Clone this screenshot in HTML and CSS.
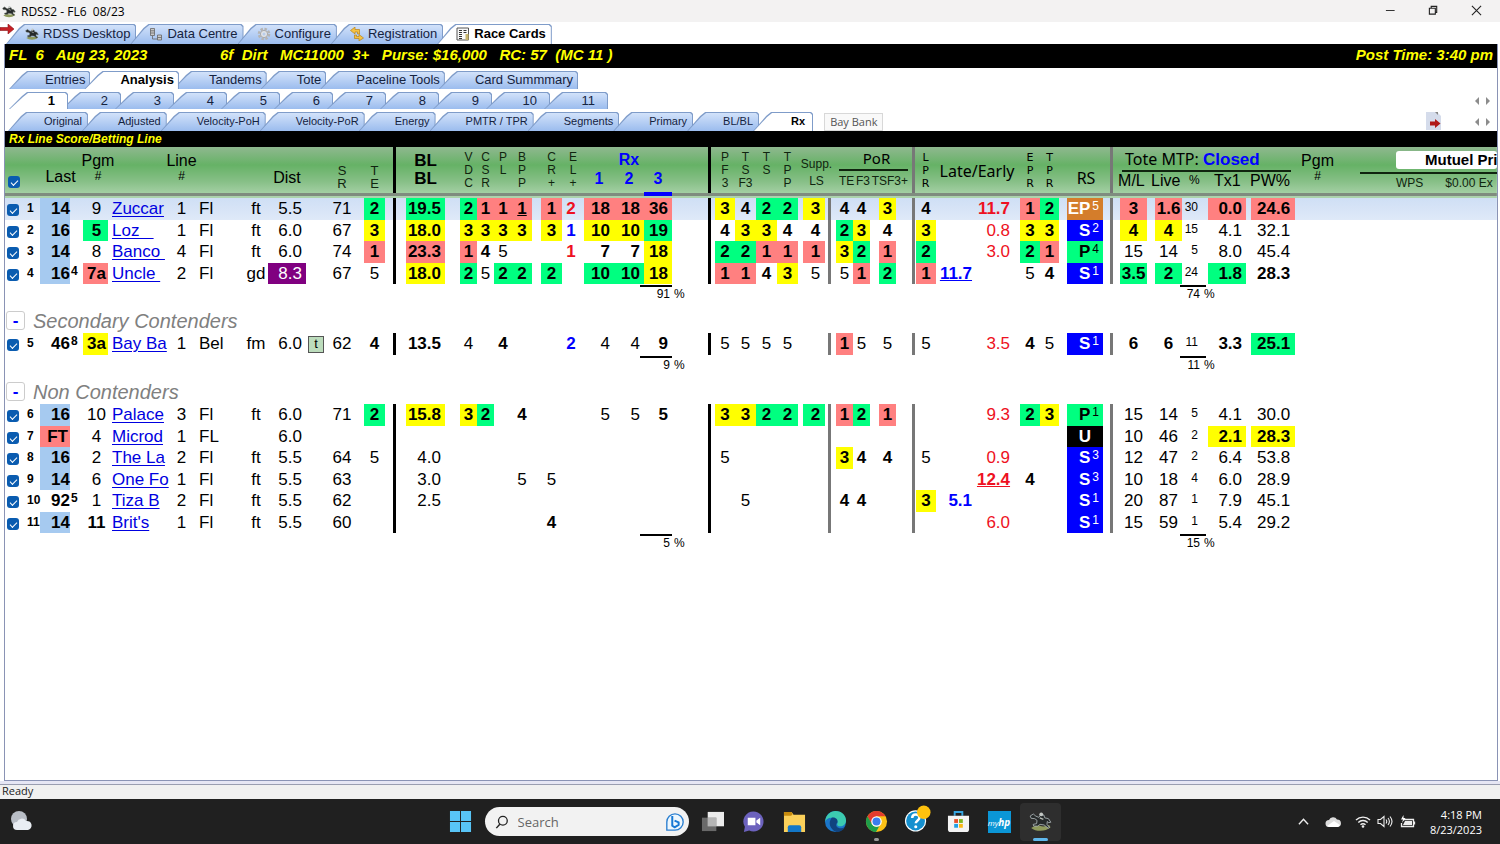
FILE: index.html
```html
<!DOCTYPE html>
<html lang="en">
<head>
<meta charset="utf-8">
<title>RDSS2 - FL6 08/23</title>
<link rel="stylesheet" href="styles.css">
</head>
<body>
<svg class="defs" aria-hidden="true">
  <symbol id="horse" viewBox="0 0 16 14">
    <path d="M1.500 11.500q3-2.500 6-1.500t6.500-.5l1 1.500q-3 2.500-7 2.500t-6.500-2z" fill="#8f9a5c"/>
    <path d="M.8 3.200L3 1.800l1.800 1.500 2 .8L8 2.500l2.300 0 .7 2 2.500.5 1.700 2.500-1.500.3-1-.8-.2 2 1.800 2.200-1 .4-2.800-2.200-2.800-.4-1.800 1.200-2.600 0-.4-1.200 2.400-.5.3-2.300L4 5 1.500 4.800z" fill="#25292a" stroke="currentColor" stroke-width=".6"/>
    <circle cx="8.500" cy="2" r="1.300" fill="#c3c7c4"/>
    <path d="M7.500 4.500l2.500 1" stroke="#b9bdb6" stroke-width=".9"/>
  </symbol>
  <symbol id="pair" viewBox="0 0 17 8"><path d="M4 0v8L0 4zM11 0v8l4-4z" fill="#8c8c8c"/></symbol>
</svg>
<div class="window">
  <header class="titlebar">
    <svg class="app-icon horse"><use href="#horse"/></svg>
    <span class="title">RDSS2 - FL6&nbsp; 08/23</span>
    <button class="win-btn" aria-label="Minimize"><svg viewBox="0 0 12 12"><path d="M1 6h9.500" stroke="#222" fill="none"/></svg></button>
    <button class="win-btn" aria-label="Restore"><svg viewBox="0 0 12 12"><path d="M1.500 3.500h6.500v6.500H1.500zM3.500 3V1.500h6V8H8.500" stroke="#222" stroke-width="1.200" fill="none"/></svg></button>
    <button class="win-btn" aria-label="Close"><svg viewBox="0 0 12 12"><path d="M1 1l10 10M11 1L1 11" stroke="#222" stroke-width="1.200" fill="none"/></svg></button>
  </header>

  <nav class="tabs main-tabs">
    <button class="tab"><svg class="horse"><use href="#horse"/></svg>RDSS Desktop</button>
    <button class="tab"><svg viewBox="0 0 14 14"><g fill="#c9c9c9" stroke="#666" stroke-width=".8"><path d="M1.500 1.500h4v7h-4zM1.500 3.800h4M1.500 6h4M8.500 8h4v5h-4zM8.500 10.500h4"/><path d="M3.500 9v3h5" fill="none"/></g></svg>Data Centre</button>
    <button class="tab"><svg viewBox="0 0 14 14"><circle cx="7" cy="7" r="5" fill="none" stroke="#b4b4b4" stroke-width="2.600" stroke-dasharray="2.400 1.500"/><circle cx="7" cy="7" r="3.600" fill="#dfe3e8" stroke="#aaa"/><circle cx="7" cy="7" r="1.500" fill="#b9cdea"/></svg>Configure</button>
    <button class="tab"><svg viewBox="0 0 14 14"><path d="M5 0v2.500h4.500V7h-2V5H5v2L0.500 3.500zM9 14v-2.500H4.500V8h2v1.500H9V7.500l4.500 3.500z" fill="#f5c243" stroke="#b98318" stroke-width=".7"/></svg>Registration</button>
    <button class="tab on"><svg viewBox="0 0 14 14"><path d="M1 1h11.500v12H1z" fill="#f8f8f8" stroke="#555"/><path d="M3 3.500h3M3 5.500h3M3 7.500h3M3 9.500h3M3 11.500h3M7.500 3.500h3M7.500 5.500h3" stroke="#333"/><path d="M9.500 7h3v6h-3z" fill="#c8b56a"/></svg>Race Cards</button>
    <svg class="dock-arrow" viewBox="0 0 14 10"><path d="M0 3.500h8V0l6 5-6 5V6.500H0z" fill="#c61f24" stroke="#8d1518" stroke-width=".6"/></svg>
  </nav>

  <main class="panel">
    <div class="race-bar">
      <span class="race-date">FL  6   Aug 23, 2023</span>
      <span class="race-info">6f  Dirt   MC11000  3+   Purse: $16,000   RC: 57  (MC 11 )</span>
      <span>Post Time: 3:40 pm</span>
    </div>
    <nav class="tabs view-tabs">
      <button class="tab">Entries</button><button class="tab on">Analysis</button><button class="tab">Tandems</button><button class="tab">Tote</button><button class="tab">Paceline Tools</button><button class="tab">Card Summmary</button>
    </nav>
    <nav class="tabs race-tabs">
      <button class="tab on">1</button><button class="tab">2</button><button class="tab">3</button><button class="tab">4</button><button class="tab">5</button><button class="tab">6</button><button class="tab">7</button><button class="tab">8</button><button class="tab">9</button><button class="tab wide">10</button><button class="tab wide">11</button>
      <svg class="pair"><use href="#pair"/></svg>
    </nav>
    <nav class="tabs sheet-tabs">
      <button class="tab">Original</button><button class="tab">Adjusted</button><button class="tab">Velocity-PoH</button><button class="tab">Velocity-PoR</button><button class="tab">Energy</button><button class="tab">PMTR / TPR</button><button class="tab">Segments</button><button class="tab">Primary</button><button class="tab">BL/BL</button><button class="tab on">Rx</button>
      <span class="tip" role="tooltip">Bay Bank</span>
      <svg class="export" viewBox="0 0 15 18"><path d="M0 0h11l4 4v14H0z" fill="#d5dceb"/><path d="M9 0l3 3V0z" fill="#888"/><path d="M4 9.500h5V7l5.500 4.500L9 16v-2.500H4z" fill="#b01818"/></svg>
      <svg class="pair"><use href="#pair"/></svg>
    </nav>
    <h1 class="sheet-title">Rx Line Score/Betting Line</h1>

    <table class="grid">
      <colgroup>
        <col class="w17"><col class="w18"><col class="w30"><col class="w13"><col class="w25"><col class="w63"><col class="w21"><col class="w52"><col class="w24"><col class="w38"><col class="w22"><col class="w28"><col class="w29"><col class="w11">
        <col class="w49"><col class="w32"><col class="w17"><col class="w18"><col class="w20"><col class="w30"><col class="w22"><col class="w30"><col class="w30"><col class="w28"><col class="w39">
        <col class="w24"><col class="w21"><col class="w21"><col class="w21"><col class="w27"><col class="w6"><col class="w22"><col class="w17"><col class="w26"><col class="w19">
        <col class="w21"><col class="w40"><col class="w38"><col class="w26"><col class="w19"><col class="w44"><col class="w10">
        <col class="w34"><col class="w35"><col class="w26"><col class="w38"><col class="w49"><col>
      </colgroup>
      <thead>
        <tr>
          <th><div class="h check-all"><input type="checkbox" checked aria-label="Select all"></div></th>
          <th></th>
          <th><div class="h low last">Last</div></th>
          <th></th>
          <th><div class="h two pgm"><span>Pgm</span><small>#</small></div></th>
          <th></th>
          <th><div class="h two"><span>Line</span><small>#</small></div></th>
          <th></th><th></th>
          <th><div class="h low">Dist</div></th>
          <th></th>
          <th><div class="h letters drop"><span>S</span><span>R</span></div></th>
          <th class="p8"><div class="h letters drop"><span>T</span><span>E</span></div></th>
          <th class="bar"></th>
          <th class="p10"><div class="h strong"><span>BL</span><span>BL</span></div></th>
          <th class="p15"><div class="h letters"><span>V</span><span>D</span><span>C</span></div></th>
          <th><div class="h letters"><span>C</span><span>S</span><span>R</span></div></th>
          <th><div class="h letters"><span>P</span><span>L</span></div></th>
          <th><div class="h letters"><span>B</span><span>P</span><span>P</span></div></th>
          <th class="p9"><div class="h letters"><span>C</span><span>R</span><span>+</span></div></th>
          <th><div class="h letters"><span>E</span><span>L</span><span>+</span></div></th>
          <th><div class="h rx"><span></span><span>1</span></div></th>
          <th><div class="h rx"><span>Rx</span><span>2</span></div></th>
          <th><div class="h rx active"><span></span><span>3</span></div></th>
          <th class="bar"></th>
          <th class="p4"><div class="h letters"><span>P</span><span>F</span><span>3</span></div></th>
          <th><div class="h letters"><span>T</span><span>S</span><span>F3</span></div></th>
          <th><div class="h letters"><span>T</span><span>S</span></div></th>
          <th><div class="h letters"><span>T</span><span>P</span><span>P</span></div></th>
          <th class="p10"><div class="h supp"><span>Supp.</span><span>LS</span></div></th>
          <th class="bar none"></th>
          <th colspan="3"><div class="por"><b>PoR</b><p><span>TE</span><span>F3</span><span>TSF3+</span></p></div></th>
          <th class="bar grey"></th>
          <th><div class="h letters dark"><span>L</span><span>P</span><span>R</span></div></th>
          <th colspan="2"><div class="h late">Late/Early</div></th>
          <th class="p6"><div class="h letters dark"><span>E</span><span>P</span><span>R</span></div></th>
          <th><div class="h letters dark"><span>T</span><span>P</span><span>R</span></div></th>
          <th class="p10"><div class="h low tahoma">RS</div></th>
          <th class="bar grey"></th>
          <th colspan="5"><div class="tote"><p class="mtp">Tote MTP: <b>Closed</b></p><p class="cols"><span>M/L</span><span>Live</span><small>%</small><span>Tx1</span><span>PW%</span></p></div></th>
          <th><div class="mutuel"><div class="h two"><span>Pgm</span><small>#</small></div><div class="prices"><b>Mutuel Pri</b><p><span>WPS</span><span>$0.00 Ex</span></p></div></div></th>
        </tr>
      </thead>
      <tbody>
        <tr class="current"><td><input type="checkbox" checked aria-label="Line 1"><td>1<td class="l">14<td><td>9<td><a href="#">Zuccar</a><td>1<td>Fl<td>ft<td>5.5<td><td>71<td class="g">2<td class="k"><td class="g">19.5<td class="g">2<td class="r">1<td class="r">1<td class="r"><u>1</u><td class="r">1<td class="red b">2<td class="r">18<td class="r">18<td class="r">36<td class="k"><td class="y">3<td class="b">4<td class="g">2<td class="g">2<td class="y">3<td class="k"><td class="b">4<td class="b">4<td class="y">3<td class="k"><td class="b">4<td><td class="red b">11.7<td class="r">1<td class="g">2<td class="ep">EP<sup>5</sup><td class="k"><td class="r">3<td class="r">1.6<td>30<td class="r">0.0<td class="r">24.6<td></tr>
        <tr><td><input type="checkbox" checked aria-label="Line 2"><td>2<td class="l">16<td><td class="g">5<td><a href="#">Loz   </a><td>1<td>Fl<td>ft<td>6.0<td><td>67<td class="y">3<td class="k"><td class="y">18.0<td class="y">3<td class="y">3<td class="y">3<td class="y">3<td class="y">3<td class="blue b">1<td class="y">10<td class="y">10<td class="g">19<td class="k"><td class="b">4<td class="y">3<td class="y">3<td class="b">4<td class="b">4<td class="k"><td class="g">2<td class="y">3<td class="b">4<td class="k"><td class="y">3<td><td class="red">0.8<td class="y">3<td class="y">3<td class="s">S<sup>2</sup><td class="k"><td class="y">4<td class="y">4<td>15<td>4.1<td>32.1<td></tr>
        <tr><td><input type="checkbox" checked aria-label="Line 3"><td>3<td class="l">14<td><td>8<td><a href="#">Banco </a><td>4<td>Fl<td>ft<td>6.0<td><td>74<td class="r">1<td class="k"><td class="r">23.3<td class="r">1<td class="b">4<td>5<td><td><td class="red b">1<td class="b">7<td class="b">7<td class="y">18<td class="k"><td class="g">2<td class="g">2<td class="r">1<td class="r">1<td class="r">1<td class="k"><td class="y">3<td class="g">2<td class="r">1<td class="k"><td class="g">2<td><td class="red">3.0<td class="g">2<td class="r">1<td class="p">P<sup>4</sup><td class="k"><td>15<td>14<td>5<td>8.0<td>45.4<td></tr>
        <tr><td><input type="checkbox" checked aria-label="Line 4"><td>4<td class="l">16<td>4<td class="r">7a<td><a href="#">Uncle </a><td>2<td>Fl<td>gd<td class="v">8.3<td><td>67<td>5<td class="k"><td class="y">18.0<td class="g">2<td>5<td class="g">2<td class="g">2<td class="g">2<td><td class="g">10<td class="g">10<td class="y">18<td class="k"><td class="r">1<td class="r">1<td class="b">4<td class="y">3<td>5<td class="k"><td>5<td class="r">1<td class="g">2<td class="k"><td class="r">1<td class="blue b"><u>11.7</u><td><td>5<td class="b">4<td class="s">S<sup>1</sup><td class="k"><td class="g">3.5<td class="g">2<td>24<td class="g">1.8<td class="b">28.3<td></tr>
      </tbody>
      <tbody>
        <tr class="total"><td colspan="21"><td colspan="3"><div class="sum"><span>91</span>%</div><td colspan="20"><td><div class="sum narrow"><span>74</span>%</div><td colspan="3"></tr>
        <tr class="group"><td colspan="48"><div><button>-</button><h2>Secondary Contenders</h2></div></tr>
      </tbody>
      <tbody>
        <tr><td><input type="checkbox" checked aria-label="Line 5"><td>5<td class="b">46<td>8<td class="y">3a<td><a href="#">Bay Ba</a><td>1<td>Bel<td>fm<td>6.0<td><span class="turf">t</span><td>62<td class="b">4<td class="k"><td class="b">13.5<td>4<td><td class="b">4<td><td><td class="blue b">2<td>4<td>4<td class="b">9<td class="k"><td>5<td>5<td>5<td>5<td><td class="k"><td class="r">1<td>5<td>5<td class="k"><td>5<td><td class="red">3.5<td class="b">4<td>5<td class="s">S<sup>1</sup><td class="k"><td class="b">6<td class="b">6<td>11<td class="b">3.3<td class="g">25.1<td></tr>
      </tbody>
      <tbody>
        <tr class="total"><td colspan="21"><td colspan="3"><div class="sum"><span>9</span>%</div><td colspan="20"><td><div class="sum narrow"><span>11</span>%</div><td colspan="3"></tr>
        <tr class="group"><td colspan="48"><div><button>-</button><h2>Non Contenders</h2></div></tr>
      </tbody>
      <tbody>
        <tr><td><input type="checkbox" checked aria-label="Line 6"><td>6<td class="l">16<td><td>10<td><a href="#">Palace</a><td>3<td>Fl<td>ft<td>6.0<td><td>71<td class="g">2<td class="k"><td class="y">15.8<td class="y">3<td class="g">2<td><td class="b">4<td><td><td>5<td>5<td class="b">5<td class="k"><td class="y">3<td class="y">3<td class="g">2<td class="g">2<td class="g">2<td class="k"><td class="r">1<td class="g">2<td class="r">1<td class="k"><td><td><td class="red">9.3<td class="g">2<td class="y">3<td class="p">P<sup>1</sup><td class="k"><td>15<td>14<td>5<td>4.1<td>30.0<td></tr>
        <tr><td><input type="checkbox" checked aria-label="Line 7"><td>7<td class="r ft">FT<td><td>4<td><a href="#">Microd</a><td>1<td>FL<td><td>6.0<td><td><td><td class="k"><td><td><td><td><td><td><td><td><td><td><td class="k"><td><td><td><td><td><td class="k"><td><td><td><td class="k"><td><td><td><td><td><td class="un">U<td class="k"><td>10<td>46<td>2<td class="y">2.1<td class="y">28.3<td></tr>
        <tr><td><input type="checkbox" checked aria-label="Line 8"><td>8<td class="l">16<td><td>2<td><a href="#">The La</a><td>2<td>Fl<td>ft<td>5.5<td><td>64<td>5<td class="k"><td>4.0<td><td><td><td><td><td><td><td><td><td class="k"><td>5<td><td><td><td><td class="k"><td class="y">3<td class="b">4<td class="b">4<td class="k"><td>5<td><td class="red">0.9<td><td><td class="s">S<sup>3</sup><td class="k"><td>12<td>47<td>2<td>6.4<td>53.8<td></tr>
        <tr><td><input type="checkbox" checked aria-label="Line 9"><td>9<td class="l">14<td><td>6<td><a href="#">One Fo</a><td>1<td>Fl<td>ft<td>5.5<td><td>63<td><td class="k"><td>3.0<td><td><td><td>5<td>5<td><td><td><td><td class="k"><td><td><td><td><td><td class="k"><td><td><td><td class="k"><td><td><td class="red b"><u>12.4</u><td class="b">4<td><td class="s">S<sup>3</sup><td class="k"><td>10<td>18<td>4<td>6.0<td>28.9<td></tr>
        <tr><td><input type="checkbox" checked aria-label="Line 10"><td>10<td class="b">92<td>5<td>1<td><a href="#">Tiza B</a><td>2<td>Fl<td>ft<td>5.5<td><td>62<td><td class="k"><td>2.5<td><td><td><td><td><td><td><td><td><td class="k"><td><td>5<td><td><td><td class="k"><td class="b">4<td class="b">4<td><td class="k"><td class="y">3<td class="blue b">5.1<td><td><td><td class="s">S<sup>1</sup><td class="k"><td>20<td>87<td>1<td>7.9<td>45.1<td></tr>
        <tr><td><input type="checkbox" checked aria-label="Line 11"><td>11<td class="l">14<td><td class="b">11<td><a href="#">Brit's</a><td>1<td>Fl<td>ft<td>5.5<td><td>60<td><td class="k"><td><td><td><td><td><td class="b">4<td><td><td><td><td class="k"><td><td><td><td><td><td class="k"><td><td><td><td class="k"><td><td><td class="red">6.0<td><td><td class="s">S<sup>1</sup><td class="k"><td>15<td>59<td>1<td>5.4<td>29.2<td></tr>
      </tbody>
      <tbody>
        <tr class="total"><td colspan="21"><td colspan="3"><div class="sum"><span>5</span>%</div><td colspan="20"><td><div class="sum narrow"><span>15</span>%</div><td colspan="3"></tr>
      </tbody>
    </table>
  </main>
  <footer class="status">Ready</footer>
</div>

<div class="taskbar">
  <button class="weather" aria-label="Weather"><svg viewBox="0 0 24 22"><circle cx="10" cy="9" r="8" fill="#b9bec6"/><path d="M8 20a4 4 0 0 1 0-8 5 5 0 0 1 9-1 4.500 4.500 0 0 1 2 9z" fill="#e9edf3"/></svg></button>
  <div class="apps">
    <button aria-label="Start"><svg viewBox="0 0 24 24"><path d="M1 1h10.500v10.500H1zM12.500 1H23v10.500H12.500zM1 12.500h10.500V23H1zM12.500 12.500H23V23H12.500z" fill="#58c4f6"/></svg></button>
    <label class="search">
      <svg viewBox="0 0 16 16"><circle cx="9" cy="6.500" r="5" fill="none" stroke="#222" stroke-width="1.500"/><path d="M5.500 10.500L1.500 15" stroke="#222" stroke-width="1.700"/></svg>
      <input type="text" placeholder="Search" aria-label="Search">
      <svg class="bing" viewBox="0 0 22 22"><path d="M2 20v-9a9 9 0 1 1 9 9z" fill="#eef7fd" stroke="#2b7fd0" stroke-width="1.500"/><path d="M8 4.500v10.500l2.500 1.800 4.500-2.600v-2.800L10.500 9.500" fill="none" stroke="#1778d4" stroke-width="2.200" stroke-linejoin="round"/></svg>
    </label>
    <button aria-label="Task view"><svg viewBox="0 0 24 24"><path d="M7 2h17v15H7z" fill="#ececec"/><path d="M1 8h15v14H1z" fill="#777" opacity=".85"/><path d="M7 8h9v9H7z" fill="#b5b5b5"/></svg></button>
    <button aria-label="Chat"><svg viewBox="0 0 24 24"><path d="M12 1.500a10.500 10.500 0 1 1-4.500 20L2 23l1-5.500A10.500 10.500 0 0 1 12 1.500z" fill="#6c62bd"/><path d="M6 8h8v8H6zM15 11l4-3v8l-4-3z" fill="#fff"/></svg></button>
    <button aria-label="File Explorer"><svg viewBox="0 0 24 24"><path d="M1 2h8l2 3h12v18H1z" fill="#fbd05a"/><path d="M1 2h8l1 2.500L8.500 6H1z" fill="#c78b0e"/><path d="M5 23v-5q0-2 2-2h10q2 0 2 2v5z" fill="#1377c8"/></svg></button>
    <button aria-label="Edge"><svg viewBox="0 0 24 24"><circle cx="12" cy="12" r="11" fill="#1b76c9"/><path d="M1 12C2 5 7 1 12 1c7 0 11 5 11 10 0 4-3 6-6 6-2 0-4-1-3-3 1-4-3-6-6-6-4 0-6 2-7 4z" fill="#3ccbb0"/><path d="M8 8c-4 5-2 12 5 15 4 0 7-2 9-5-6 3-12-1-8-5 1-3-2-6-6-5z" fill="#10437f"/></svg></button>
    <button class="running" aria-label="Chrome"><svg viewBox="0 0 24 24"><circle cx="12" cy="12" r="11" fill="#fbc116"/><path d="M2.500 6.500A11 11 0 0 1 21.500 6.500H12L7 15z" fill="#e33b2e"/><path d="M2.500 6.500L7.200 14.700Q9 17.500 12 17.500l3-.7L11.500 23A11 11 0 0 1 2.500 6.500z" fill="#1e9e4a"/><circle cx="12" cy="12" r="5.500" fill="#fff"/><circle cx="12" cy="12" r="4.200" fill="#3b7ded"/></svg></button>
    <button aria-label="Get Help"><svg class="help" viewBox="0 0 28 28"><circle cx="12" cy="16" r="11" fill="#fff"/><circle cx="12" cy="16" r="9.800" fill="#1590cf"/><path d="M8.500 13c0-5 7.500-4.500 7.500-.5 0 3-3.800 3-3.800 6" fill="none" stroke="#fff" stroke-width="2.600"/><circle cx="12.200" cy="22" r="1.600" fill="#fff"/><circle cx="20.500" cy="7" r="7" fill="#ffc20e"/></svg></button>
    <button aria-label="Microsoft Store"><svg viewBox="0 0 24 24"><path d="M8 6V2h8v4" fill="none" stroke="#36a5e0" stroke-width="2"/><path d="M1 6h22v14q0 3-3 3H4q-3 0-3-3z" fill="#f4f4f4"/><path d="M7.500 9.500h4v4h-4z" fill="#e8502a"/><path d="M12.500 9.500h4v4h-4z" fill="#7db81f"/><path d="M7.500 14.500h4v4h-4z" fill="#1ea0e6"/><path d="M12.500 14.500h4v4h-4z" fill="#fbb814"/></svg></button>
    <button aria-label="myHP"><span class="myhp">my<b>hp</b></span></button>
    <button class="running focused" aria-label="RDSS2"><svg class="horse"><use href="#horse"/></svg></button>
  </div>
  <div class="tray">
    <svg viewBox="0 0 12 12"><path d="M1 9l5-5.500L11 9" fill="none" stroke="#eee" stroke-width="1.500"/></svg>
    <svg class="cloud" viewBox="0 0 16 12"><path d="M4 11a3.500 3.500 0 0 1 0-7 4.500 4.500 0 0 1 8-.5A3.800 3.800 0 0 1 13 11z" fill="#ddd"/><path d="M2 10l7-5 6 4-2 2H4z" fill="#fff"/></svg>
    <svg class="wifi" viewBox="0 0 16 13"><path d="M1 5a10 10 0 0 1 14 0M3.300 7.500a6.500 6.500 0 0 1 9.400 0M5.500 9.800a3.500 3.500 0 0 1 5 0" fill="none" stroke="#eee" stroke-width="1.400"/><circle cx="8" cy="11.500" r="1.300" fill="#eee"/></svg>
    <svg class="sound" viewBox="0 0 16 13"><path d="M1 4.500h2.500L7 1.500v10L3.500 8.500H1zM9 4.500q1.500 2 0 4M11 3q2.800 3.500 0 7M13 1.500q4 5 0 10" fill="none" stroke="#eee" stroke-width="1.100"/></svg>
    <svg class="battery" viewBox="0 0 16 13"><path d="M3 4.500h10.500v7H1.500V8M14.500 6.500v3" fill="none" stroke="#eee" stroke-width="1.300"/><path d="M5 6h7v4H3z" fill="#eee"/><path d="M3.500 0L1 4.500h2L2 8l3.500-5h-2z" fill="#fff"/></svg>
    <div class="clock"><span>4:18 PM</span><span>8/23/2023</span></div>
  </div>
</div>
</body>
</html>
```
FILE: styles.css
```css
* { box-sizing: border-box; }
html, body { height: 100%; margin: 0; }
body {
  display: flex;
  flex-direction: column;
  overflow: hidden;
  background: #fff;
  color: #000;
  font-family: "Liberation Sans", Arial, sans-serif;
}
button, input { font: inherit; color: inherit; }
button { border: 0; padding: 0; background: none; }
p, h1, h2 { margin: 0; font-size: inherit; font-weight: inherit; }
.defs { position: absolute; width: 0; height: 0; }
.horse { color: #5c6258; }

.window { flex: 1; display: flex; flex-direction: column; min-height: 0; }
.titlebar {
  display: flex;
  align-items: center;
  height: 22px;
  padding-right: 2px;
  background: #f3f2f2;
  font: 12px "Open Sans", "Noto Sans", sans-serif;
}
.app-icon { width: 14px; height: 13px; margin: 0 5px 0 2px; }
.title { flex: 1; }
.win-btn { width: 43px; height: 20px; }
.win-btn svg { width: 11px; height: 11px; }

/* Tab strips */
.tabs { display: flex; align-items: flex-end; flex: none; position: relative; }
.tab {
  position: relative;
  z-index: 0;
  flex: none;
  height: 18px;
  margin-right: -6px;
  padding: 0 5px 0 36px;
  background: #7f9cc9;
  clip-path: polygon(0 100%, 13px 4px, 18px 0, calc(100% - 2px) 0, 100% 2px, 100% 100%);
  font-size: 13px;
  line-height: 18px;
  text-align: right;
  color: #15233f;
  white-space: nowrap;
}
.tab::before {
  content: "";
  position: absolute;
  z-index: -1;
  inset: 1px 1px 0 1px;
  background: linear-gradient(#d2e2fa, #9bbcee);
  clip-path: polygon(0 100%, 13px 4px, 18px 0, calc(100% - 2px) 0, 100% 2px, 100% 100%);
}
.tab.on { z-index: 1; color: #000; font-weight: bold; }
.tab.on::before { background: #fff; }

.main-tabs { height: 22px; padding-left: 6px; }
.main-tabs .tab {
  display: flex;
  align-items: center;
  gap: 4px;
  height: 20px;
  padding: 0 6px 0 19px;
}
.main-tabs .tab svg { width: 14px; height: 14px; }
.dock-arrow { position: absolute; left: 0; top: 2px; width: 14px; height: 10px; }
.view-tabs { height: 21px; padding-left: 4px; }
.race-tabs { height: 20px; padding-left: 4px; }
.race-tabs .tab { width: 59px; height: 17px; padding: 0 13px 0 0; line-height: 17px; }
.race-tabs .tab.wide { width: 64px; }
.sheet-tabs { height: 22px; padding-left: 3px; }
.sheet-tabs .tab { height: 19px; padding: 0 6px 0 36px; font-size: 11px; line-height: 19px; }
.sheet-tabs .tab.on { padding: 0 8px 0 38px; }
.tip {
  margin-left: 17px;
  padding: 0 5px;
  border: 1px solid #d8d8d8;
  background: #f9f9f9;
  font: 11px/16px "Open Sans", sans-serif;
  color: #555;
}
.pair { width: 17px; height: 8px; margin: 0 5px 4px auto; }
.export { width: 15px; height: 18px; margin: 0 34px 1px auto; }
.sheet-tabs .pair { margin-left: 0; margin-bottom: 5px; }

.panel {
  flex: 1;
  margin: 0 2px 0 4px;
  border: 1px solid #8a93b5;
  border-top: 0;
  overflow: hidden;
}
.race-bar {
  display: flex;
  height: 24px;
  padding: 0 4px;
  background: #000;
  color: #ff0;
  font: italic bold 15px/22px "Liberation Sans", sans-serif;
  white-space: pre;
}
.race-date { width: 211px; }
.race-info { flex: 1; }
.sheet-title {
  height: 16px;
  padding-left: 4px;
  background: #000;
  color: #ff0;
  font: italic bold 12px/16px "Liberation Sans", sans-serif;
}

/* Grid */
.grid {
  width: 100%;
  table-layout: fixed;
  border-collapse: separate;
  border-spacing: 0;
  font-size: 17px;
  line-height: 20px;
  white-space: nowrap;
}
.w6 { width: 6px; } .w10 { width: 10px; } .w11 { width: 11px; } .w13 { width: 13px; }
.w17 { width: 17px; } .w18 { width: 18px; } .w19 { width: 19px; } .w20 { width: 20px; }
.w21 { width: 21px; } .w22 { width: 22px; } .w24 { width: 24px; } .w25 { width: 25px; }
.w26 { width: 26px; } .w27 { width: 27px; } .w28 { width: 28px; } .w29 { width: 29px; }
.w30 { width: 30px; } .w32 { width: 32px; } .w34 { width: 34px; } .w35 { width: 35px; }
.w38 { width: 38px; } .w39 { width: 39px; } .w40 { width: 40px; } .w44 { width: 44px; }
.w49 { width: 49px; } .w52 { width: 52px; } .w63 { width: 63px; }

.grid thead tr {
  height: 51px;
  background: linear-gradient(#8fb88f 0, #66b266 18px, #86bf86 34px, #a3cfa3 46px, #7f8c7f 46px, #7f8c7f 49px, #acd3ac 49px);
}
.grid th { height: 51px; padding: 1px 0 0; vertical-align: top; font-weight: normal; text-align: left; }
.grid td { height: 21px; padding: 0; text-align: center; background-clip: padding-box; border: 0 solid transparent; }
.grid tbody tr:nth-child(odd) td { height: 22px; }

.h { display: flex; flex-direction: column; align-items: center; }
.h.low { padding-top: 20px; font-size: 16px; }
.h.last { padding: 19px 0 0 11px; }
.h.low.tahoma, .late { font-family: "Noto Sans", sans-serif; font-size: 16px; }
.h.two { padding-top: 3px; font-size: 16px; line-height: 20px; }
.h.two small { font-size: 12px; line-height: 10px; }
.h.pgm { padding-left: 5px; }
.check-all { padding-top: 26px; }
.letters { padding-top: 3px; font-size: 12px; line-height: 13px; color: #10240f; }
.letters.drop { padding-top: 16px; font-size: 13px; }
.letters.dark { font-family: "DejaVu Sans", sans-serif; font-size: 11px; color: #000; }
.strong { padding-top: 4px; font-size: 17px; font-weight: bold; line-height: 18px; }
.h.rx { height: 48px; padding-top: 2px; font-size: 16px; font-weight: bold; line-height: 19px; color: #00f; }
.rx span { height: 19px; }
.rx.active { border-bottom: 4px solid #00f; }
.supp { padding-top: 8px; font-size: 12px; line-height: 17px; color: #10240f; }
.late { padding: 13px 0 0 4px; }
.por { margin: 0 -12px 0 8px; }
.por b { display: block; border-bottom: 2px solid #10240f; text-align: center; font: 15px/21px "Noto Sans", sans-serif; padding-left: 6px; }
.por p { display: flex; justify-content: space-between; font-size: 12px; line-height: 20px; color: #10240f; }
.tote { margin: 0 4px 0 5px; }
.mtp { border-bottom: 2px solid #10240f; padding: 1px 0 0 3px; margin: 0 0 0 4px; font: 16px/20px "Noto Sans", sans-serif; }
.mtp b { font: bold 17px/20px "Liberation Sans", sans-serif; color: #00f; }
.cols { display: grid; grid-template-columns: 33px 38px 23px 38px 1fr; font-size: 16px; line-height: 17px; }
.cols small { font-size: 12px; }
.cols span:nth-child(4) { padding-left: 2px; }
.mutuel { display: flex; gap: 26px; overflow: hidden; padding-left: 6px; }
.prices { flex: 1; min-width: 0; padding-top: 3px; }
.prices b { display: block; margin: 0 0 3px 36px; padding-left: 29px; border-radius: 3px; background: #fff; font-size: 15px; line-height: 18px; overflow: hidden; }
.prices p { display: flex; gap: 22px; padding-left: 36px; border-top: 2px solid #10240f; font-size: 12px; line-height: 18px; color: #10240f; }

.grid .p4 { padding-left: 4px; }
.grid .p6 { padding-left: 6px; }
.grid .p8 { padding-left: 8px; }
.grid .p9 { padding-left: 9px; }
.grid .p10 { padding-left: 10px; }
.grid .p15 { padding-left: 15px; }
th.bar { background: linear-gradient(#000, #000) right top / 3px 46px no-repeat; }
th.bar.grey { background-image: linear-gradient(#777, #777); }
th.bar.none { background: none; }

/* Column alignment and gutters */
.grid td:nth-child(1) { padding-left: 2px; text-align: left; }
.grid td:nth-child(2) { padding-left: 5px; text-align: left; font-size: 12px; font-weight: bold; line-height: 20px; }
.grid td:nth-child(3) { text-align: right; font-weight: bold; }
.grid td:nth-child(4) { padding-left: 1px; text-align: left; font-size: 12px; font-weight: bold; line-height: 16px; }
.grid td:nth-child(4), .grid td:nth-child(2), .grid td:nth-child(45) { vertical-align: top; }
.grid td:nth-child(5) { padding-left: 2px; }
.grid td:nth-child(6) { padding-left: 4px; text-align: left; }
.grid td:nth-child(8) { padding-left: 7px; text-align: left; }
.grid td:nth-child(10) { padding-right: 4px; text-align: right; }
.grid td:nth-child(11) { padding-left: 2px; text-align: left; }
.grid td:nth-child(13) { border-left-width: 8px; }
.grid td:nth-child(15) { border-left-width: 10px; padding-right: 4px; text-align: right; }
.grid td:nth-child(16) { border-left-width: 15px; }
.grid td:nth-child(20) { border-left-width: 9px; }
.grid td:nth-child(21) { padding-right: 4px; }
.grid td:nth-child(n+22):nth-child(-n+24) { padding-right: 4px; text-align: right; }
.grid td:nth-child(26) { border-left-width: 4px; }
.grid td:nth-child(30) { border-left-width: 5px; padding-left: 3px; }
.grid td:nth-child(32) { border-left-width: 5px; }
.grid td:nth-child(34) { border-left-width: 9px; }
.grid td:nth-child(36) { border-left-width: 1px; }
.grid td:nth-child(37), .grid td:nth-child(38) { padding-right: 4px; text-align: right; }
.grid td:nth-child(39) { border-left-width: 6px; }
.grid td:nth-child(41) { border-left-width: 8px; padding-right: 4px; text-align: right; font-weight: bold; }
.grid td:nth-child(43) { border-left-width: 7px; }
.grid td:nth-child(44) { border-left-width: 8px; }
.grid td:nth-child(45) { padding-right: 10px; text-align: right; font-size: 12px; line-height: 18px; }
.grid td:nth-child(46) { padding-right: 4px; text-align: right; }
.grid td:nth-child(47) { border-left-width: 5px; padding-right: 5px; text-align: right; }
.grid td.k { border-right: 3px solid #777; }
.grid td.k:nth-child(14), .grid td.k:nth-child(25) { border-right-color: #000; }

.current { background: linear-gradient(#cfdff5, #dfe9f8); }
.b, .r, .g, .y { font-weight: bold; }
.r { background-color: #ff8080; }
.g, .p { background-color: #00ff80; }
.y { background-color: #ff0; }
.l { background-color: #a6caf0; }
.v { background-color: #800080; color: #fff; }
.s { background-color: #00f; color: #fff; }
.ep { background-color: #d47d2b; color: #fff; }
.un { background-color: #000; color: #fff; }
.grid td.ft { padding-right: 2px; }
.grid td.un:nth-child(41) { padding-right: 12px; }
.red { color: #ee1122; }
.blue { color: #00f; }
.grid sup { margin-left: 2px; font-size: 12px; font-weight: normal; line-height: 0; vertical-align: 4px; }
.grid a { color: #0000e0; white-space: pre; text-decoration: underline; text-underline-offset: 2px; }
.turf { display: block; width: 16px; height: 17px; border: 1px solid #555; background: #bcdcbc; font-size: 13px; line-height: 14px; text-align: center; }

input[type="checkbox"] {
  appearance: none;
  display: block;
  width: 12px;
  height: 12px;
  margin: 2px 0 0;
  border-radius: 3px;
  background: #0a5cb0;
}
input[type="checkbox"]:checked::after {
  content: "";
  display: block;
  width: 6px;
  height: 3px;
  margin: 4px 3px;
  border: solid #fff;
  border-width: 0 0 1px 1px;
  transform: rotate(-45deg);
}

.grid .total td, .grid tbody .total:nth-child(odd) td { height: 20px; padding: 0; vertical-align: top; border: 0; font-size: 12px; font-weight: normal; }
.sum { display: flex; gap: 4px; width: 32px; margin: 1px 0 0 auto; border-top: 2px solid #000; line-height: 15px; }
.sum span { flex: none; width: 30px; text-align: right; }
.grid .narrow { width: 26px; margin-left: -2px; }
.narrow span { width: 20px; }
.grid .group td { height: 29px; padding: 0; }
.group div { display: flex; align-items: center; gap: 8px; padding: 4px 0 0 1px; }
.group button { width: 19px; height: 19px; border: 1px solid #ccc; border-radius: 3px; color: #00f; font-weight: bold; line-height: 14px; }
.group h2 { font-size: 20px; font-style: italic; line-height: 24px; color: #808080; }

.status { flex: none; height: 18px; border-top: 3px solid #e6e6f4; box-shadow: inset 0 1px #999db0; padding-left: 2px; background: #f0f0f0; font: 11px/13px "Open Sans", sans-serif; color: #222; }

/* Taskbar */
.taskbar {
  flex: none;
  display: grid;
  grid-template-columns: 1fr auto 1fr;
  align-items: center;
  height: 45px;
  background: #202020;
  color: #fff;
}
.weather { justify-self: start; width: 24px; height: 24px; margin-left: 9px; }
.weather svg { width: 24px; height: 22px; }
.apps { display: flex; align-items: center; }
.apps button { position: relative; display: grid; place-items: center; width: 41px; height: 38px; }
.apps button svg { width: 23px; height: 23px; }
.apps button svg.help { width: 27px; height: 28px; margin-top: -5px; }
.apps button svg.horse { color: #a9b2b4; }
.search { display: flex; align-items: center; gap: 9px; width: 204px; height: 29px; margin: 0 3px 0 4px; padding: 0 4px 0 10px; border-radius: 15px; background: #f2f2f2; }
.search svg { flex: none; width: 14px; height: 14px; }
.search .bing { width: 20px; height: 20px; }
.search input { flex: 1; min-width: 0; border: 0; padding: 0; background: none; color: #555; font: 13px "Open Sans", sans-serif; }
.search input::placeholder { color: #666; opacity: 1; }
.running::after { content: ""; position: absolute; bottom: 0; width: 5px; height: 3px; border-radius: 2px; background: #9a9a9a; }
.apps .focused { border-radius: 4px; background: #2e2e2e; }
.focused::after { width: 15px; background: #5fb8ec; }
.myhp { width: 23px; height: 22px; background: #0b96d6; font: italic 8px/22px "Open Sans", sans-serif; color: #fff; }
.myhp b { font-size: 10px; }
.tray { display: flex; align-items: center; justify-self: end; padding-right: 18px; }
.tray svg { width: 11px; height: 11px; margin-right: 16px; }
.tray .cloud { width: 16px; height: 12px; margin-right: 14px; }
.tray .wifi { width: 16px; height: 13px; margin-right: 6px; }
.tray .sound { width: 16px; height: 13px; margin-right: 7px; }
.tray .battery { width: 16px; height: 13px; margin-right: 14px; }
.clock { display: flex; flex-direction: column; align-items: flex-end; font: 11px/15px "Open Sans", sans-serif; }
```
